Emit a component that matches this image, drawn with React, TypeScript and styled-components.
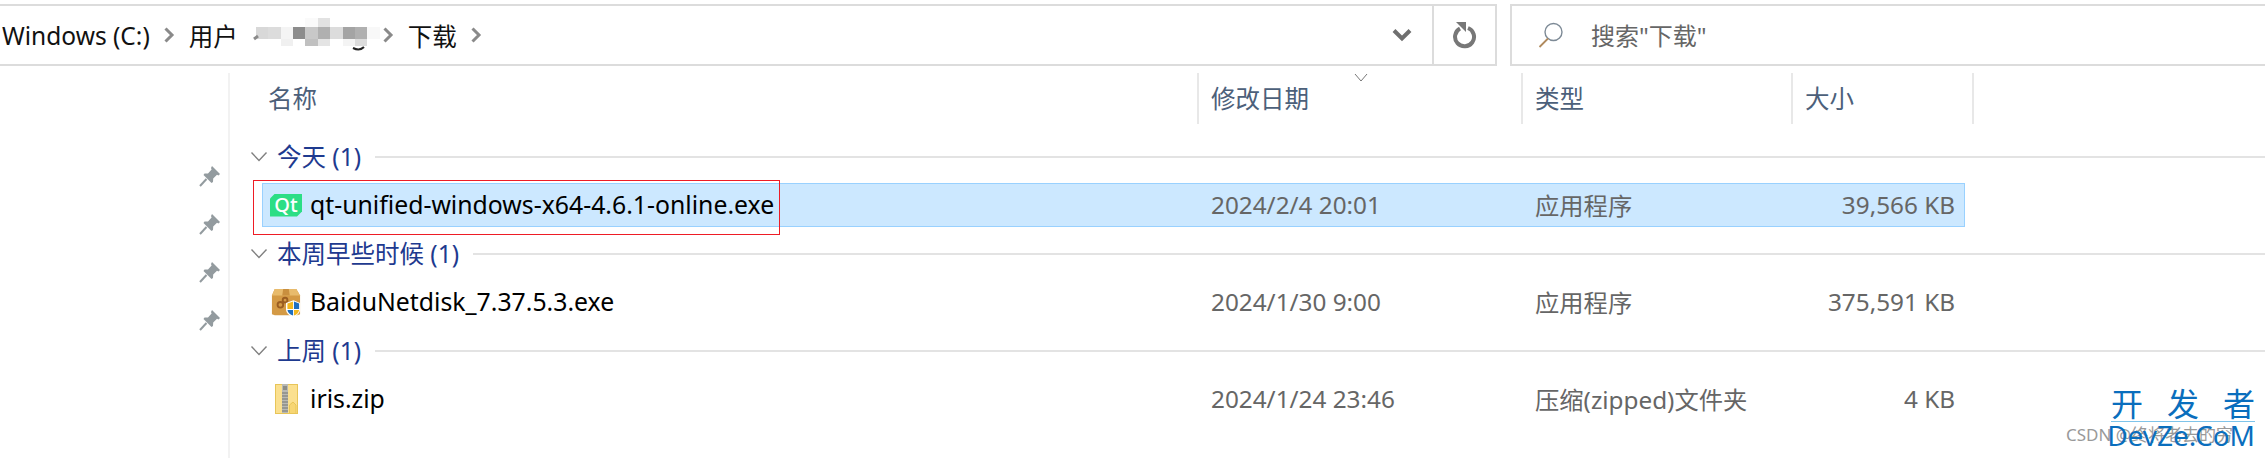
import styled, { createGlobalStyle } from 'styled-components';

const GlobalStyle = createGlobalStyle`
  html, body {
    margin: 0;
    padding: 0;
    background: #fff;
  }
  body {
    width: 2265px;
    height: 458px;
    overflow: hidden;
    font-family: "Noto Sans", "Noto Sans CJK SC", sans-serif;
  }
`;

// the pixelated part of the path, row by row
const mosaic = [
  { height: 9, shades: ['ff', 'ff', 'ff', 'ff', 'fa', 'e2', 'ff', 'ff', 'ff', 'ff'] },
  { height: 12, shades: ['d8', 'dc', 'f4', '8c', 'c8', 'b0', 'dc', 'a4', 'b0', 'f8'] },
  { height: 7, shades: ['ff', 'ff', 'f0', 'ff', 'c0', 'e4', 'ff', 'f4', 'dc', 'ff'] },
];

const files = [
  {
    group: '今天 (1)',
    name: 'qt-unified-windows-x64-4.6.1-online.exe',
    date: '2024/2/4 20:01',
    type: '应用程序',
    size: '39,566 KB',
    icon: 'qt',
    selected: true,
  },
  {
    group: '本周早些时候 (1)',
    name: 'BaiduNetdisk_7.37.5.3.exe',
    date: '2024/1/30 9:00',
    type: '应用程序',
    size: '375,591 KB',
    icon: 'box',
    selected: false,
  },
  {
    group: '上周 (1)',
    name: 'iris.zip',
    date: '2024/1/24 23:46',
    type: '压缩(zipped)文件夹',
    size: '4 KB',
    icon: 'zip',
    selected: false,
  },
];

const Chevron = () => (
  <svg width="12" height="18" viewBox="0 0 12 18">
    <path d="M2.5 2.5 L9 9 L2.5 15.5" fill="none" stroke="#8a8a8a" strokeWidth="3" />
  </svg>
);

const GroupToggle = () => (
  <svg width="18" height="12" viewBox="0 0 18 12">
    <path d="M1.5 1.5 L9 9.5 L16.5 1.5" fill="none" stroke="#808080" strokeWidth="1.4" />
  </svg>
);

const Pin = () => (
  <svg width="22" height="22" viewBox="0 0 22 22">
    <path d="M13 1 L21 9 L19.5 10.5 L18 9.8 L14.2 13.4 L14 17 L12.5 18 L4.5 10 L5.5 8.5 L9 8.4 L12.6 4.5 L12 3 Z" fill="#939b9f" />
    <path d="M7.5 14 L1 21" stroke="#939b9f" strokeWidth="2" />
  </svg>
);

const BoxIcon = () => (
  <svg width="30" height="30" viewBox="0 0 32 32">
    <path d="M4 2 H27 L31 9 V29 L28 30 H4 L1 29 V9 Z" fill="#d49a45" />
    <path d="M4 2 H27 L31 9 H1 Z" fill="#e8bb6c" />
    <path d="M13 2 H19 L20 9 H12 Z" fill="#c98f3e" />
    <circle cx="10" cy="19" r="3" fill="none" stroke="#9b5d20" strokeWidth="2" />
    <circle cx="15" cy="14" r="2.5" fill="none" stroke="#9b5d20" strokeWidth="2" />
    <path d="M16 17 L24 14 L31 17 V24 C31 28 27 31 24 32 C20 31 16 28 16 24 Z" fill="#fff" />
    <path d="M23.5 15.5 V23.5 H17.5 V17.5 Z" fill="#f4b81f" />
    <path d="M24.5 15.5 L30 17.5 V23.5 H24.5 Z" fill="#1f6fc0" />
    <path d="M17.5 24.5 H23.5 V30.5 C20.5 29.5 18 27.5 17.5 24.5 Z" fill="#1f6fc0" />
    <path d="M24.5 24.5 H30 C29.5 27.5 27.5 29.5 24.5 30.5 Z" fill="#f4b81f" />
  </svg>
);

const ZipIcon = () => (
  <svg width="23" height="30" viewBox="0 0 23 30">
    <rect x="0.5" y="0.5" width="22" height="29" fill="#fbe08f" stroke="#e8c558" />
    <rect x="7" y="0" width="6" height="29" fill="#b9b9b4" />
    <path d="M7 9 H13 M7 12 H13 M7 15 H13 M7 18 H13 M7 21 H13 M7 24 H13 M7 27 H13" stroke="#77776f" strokeWidth="1.2" />
    <rect x="8" y="2" width="4" height="4" fill="#8c8c86" />
    <path d="M18 18 L21 21 V29.5 H14.5 V21 Z" fill="#f7d673" stroke="#e8c558" />
  </svg>
);

const App = () => {
  return (
    <>
      <GlobalStyle />
      <Page>
        <Toolbar>
          <AddressBar>
            <Crumb>Windows (C:)</Crumb>
            <Chevron />
            <Crumb>用户</Crumb>
            <Blurred>
              {mosaic.map((row, rowIndex) => (
                <MosaicRow key={rowIndex} $height={row.height}>
                  {row.shades.map((shade, index) => (
                    <MosaicCell key={index} $shade={shade} />
                  ))}
                </MosaicRow>
              ))}
              <Peek width="124" height="34" viewBox="0 0 124 34">
                <path d="M1 21 L5 18" stroke="#8a8a8a" strokeWidth="3" fill="none" />
                <path d="M100 30 C104 32 108 32 111 29" stroke="#222" strokeWidth="2" fill="none" />
              </Peek>
            </Blurred>
            <Chevron />
            <Crumb $after>下载</Crumb>
            <Chevron />
            <Dropdown>
              <svg width="20" height="14" viewBox="0 0 20 14">
                <path d="M2 2.5 L10 10.5 L18 2.5" fill="none" stroke="#6f6f6f" strokeWidth="4" />
              </svg>
            </Dropdown>
            <Refresh>
              <svg width="24" height="30" viewBox="0 0 24 30">
                <path d="M7 8.5 A9.5 9.5 0 1 0 15 8" fill="none" stroke="#777" strokeWidth="4" />
                <path d="M3 2 H13 V12 Z" fill="#777" />
              </svg>
            </Refresh>
          </AddressBar>
          <SearchBox>
            <svg width="26" height="26" viewBox="0 0 26 26">
              <circle cx="15.5" cy="10" r="8.5" fill="none" stroke="#7d8a96" strokeWidth="1.4" />
              <path d="M10 16.5 L1.5 25" stroke="#b08a5e" strokeWidth="1.8" />
            </svg>
            <SearchText>搜索"下载"</SearchText>
          </SearchBox>
        </Toolbar>
        <Body>
          <PinColumn>
            <Pin />
            <Pin />
            <Pin />
            <Pin />
          </PinColumn>
          <Main>
            <HeaderRow>
              <HeaderCell>名称</HeaderCell>
              <HeaderCell>
                修改日期
                <SortArrow>
                  <svg width="14" height="9" viewBox="0 0 14 9">
                    <path d="M1 1 L7 8 L13 1" fill="none" stroke="#777" strokeWidth="1" />
                  </svg>
                </SortArrow>
              </HeaderCell>
              <HeaderCell>类型</HeaderCell>
              <HeaderCell>大小</HeaderCell>
            </HeaderRow>
            {files.map((file) => (
              <section key={file.name}>
                <GroupRow>
                  <GroupToggle />
                  <GroupTitle>{file.group}</GroupTitle>
                  <GroupLine />
                </GroupRow>
                <FileRowFrame>
                  <FileRow $selected={file.selected}>
                    <NameCell>
                      <IconSlot>
                        {file.icon === 'qt' && <QtBadge>Qt</QtBadge>}
                        {file.icon === 'box' && <BoxIcon />}
                        {file.icon === 'zip' && <ZipIcon />}
                      </IconSlot>
                      <FileName>{file.name}</FileName>
                    </NameCell>
                    <MetaCell>{file.date}</MetaCell>
                    <MetaCell>{file.type}</MetaCell>
                    <SizeCell>{file.size}</SizeCell>
                  </FileRow>
                  {file.selected && <RedBox />}
                </FileRowFrame>
              </section>
            ))}
          </Main>
        </Body>
        <Watermark>
          <Csdn>CSDN @终将老去的穷</Csdn>
          <BrandTop>
            <span>开</span>
            <span>发</span>
            <span>者</span>
          </BrandTop>
          <BrandBottom>DevZe.CoM</BrandBottom>
        </Watermark>
      </Page>
    </>
  );
};

const Page = styled.div`
  position: relative;
  width: 2265px;
  height: 458px;
  background: #fff;
  overflow: hidden;
`;

const Toolbar = styled.div`
  display: flex;
  gap: 13px;
  padding-top: 4px;
  height: 62px;
`;

const AddressBar = styled.div`
  display: flex;
  align-items: center;
  width: 1497px;
  height: 62px;
  box-sizing: border-box;
  border: 2px solid #dcdcdc;
  border-left: none;
  padding-left: 2px;
  flex-shrink: 0;
`;

const Crumb = styled.span<{ $after?: boolean }>`
  font-size: 24.5px;
  color: #111;
  margin-left: ${(p) => (p.$after ? '14px' : '0')};
  margin-right: 13px;
  white-space: nowrap;

  & + svg {
    margin-right: 14px;
  }
`;

const Blurred = styled.div`
  position: relative;
  width: 124px;
  margin: 0 2px 6px 5px;
  display: flex;
  flex-direction: column;
`;

const Peek = styled.svg`
  position: absolute;
  left: -3px;
  top: 0;
`;

const MosaicRow = styled.div<{ $height: number }>`
  display: flex;
  height: ${(p) => p.$height}px;
`;

const MosaicCell = styled.div<{ $shade: string }>`
  flex: 1;
  background: #${(p) => p.$shade.repeat(3)};
`;

const Dropdown = styled.div`
  margin-left: auto;
  width: 60px;
  display: flex;
  justify-content: center;
`;

const Refresh = styled.div`
  width: 61px;
  height: 100%;
  border-left: 2px solid #dcdcdc;
  display: flex;
  align-items: center;
  justify-content: center;
`;

const SearchBox = styled.div`
  flex: 1;
  height: 62px;
  box-sizing: border-box;
  border: 2px solid #dcdcdc;
  border-right: none;
  display: flex;
  align-items: center;
  padding-left: 26px;
  gap: 27px;
`;

const SearchText = styled.span`
  font-size: 24px;
  color: #666;
  margin-bottom: 2px;
`;

const Body = styled.div`
  display: flex;
  margin-top: 7px;
`;

const PinColumn = styled.div`
  width: 230px;
  height: 385px;
  box-sizing: border-box;
  border-right: 2px solid #f2f2f2;
  display: flex;
  flex-direction: column;
  align-items: flex-end;
  gap: 26px;
  padding: 92px 7px 0 0;
`;

const Main = styled.div`
  flex: 1;
`;

const HeaderRow = styled.div`
  display: grid;
  grid-template-columns: 968px 324px 270px 181px;
  height: 51px;
  margin: 0 0 6px 1px;
`;

const HeaderCell = styled.div`
  position: relative;
  display: flex;
  align-items: center;
  padding: 0 0 2px 37px;
  font-size: 24.5px;
  color: #4c607a;
  box-sizing: border-box;
  border-right: 2px solid #e8e8e8;

  & + & {
    padding-left: 12px;
  }
`;

const SortArrow = styled.span`
  position: absolute;
  top: 0;
  left: 155px;
  line-height: 0;
`;

const GroupRow = styled.div`
  display: flex;
  align-items: center;
  height: 53px;
  padding-left: 20px;
`;

const GroupTitle = styled.span`
  font-size: 24.5px;
  color: #1e3a8f;
  margin-left: 9px;
  margin-right: 14px;
  padding-bottom: 3px;
  white-space: nowrap;
`;

const GroupLine = styled.div`
  flex: 1;
  height: 2px;
  background: #e3e3e3;
`;

const FileRowFrame = styled.div`
  position: relative;
  margin-left: 32px;
  width: 1703px;
`;

const FileRow = styled.div<{ $selected: boolean }>`
  display: grid;
  grid-template-columns: 948px 324px 270px 150px;
  align-items: center;
  height: 44px;
  box-sizing: border-box;
  border: 1px solid ${(p) => (p.$selected ? '#99d1ff' : 'transparent')};
  background: ${(p) => (p.$selected ? '#cce8ff' : 'transparent')};
`;

const NameCell = styled.div`
  display: flex;
  align-items: center;
  white-space: nowrap;
`;

const FileName = styled.span`
  font-size: 24.8px;
  color: #000;
  padding-bottom: 2px;
`;

const IconSlot = styled.div`
  width: 32px;
  margin: 0 8px 0 7px;
  display: flex;
  justify-content: center;
  align-items: center;
`;

const QtBadge = styled.div`
  width: 32px;
  height: 23px;
  background: #2cde85;
  color: #fff;
  font-size: 20px;
  font-weight: 500;
  line-height: 22px;
  text-align: center;
  clip-path: polygon(5px 0, 100% 0, 100% calc(100% - 5px), calc(100% - 5px) 100%, 0 100%, 0 5px);
`;

const MetaCell = styled.div`
  font-size: 24.3px;
  color: #666;
  padding-bottom: 2px;
  white-space: nowrap;
`;

const SizeCell = styled(MetaCell)`
  text-align: right;
`;

const RedBox = styled.div`
  position: absolute;
  left: -9px;
  top: -3px;
  width: 525px;
  height: 53px;
  border: 1px solid #ee1c25;
`;

const Watermark = styled.div`
  position: absolute;
  right: 10px;
  bottom: 9px;
  width: 189px;
  height: 62px;
`;

const Csdn = styled.div`
  position: absolute;
  left: 0;
  bottom: 2px;
  font-size: 17px;
  line-height: 24px;
  color: #999;
  white-space: nowrap;
`;

const BrandTop = styled.div`
  position: absolute;
  right: 0;
  top: 0;
  width: 144px;
  display: flex;
  justify-content: space-between;
  font-size: 32px;
  line-height: 34px;
  color: #0a6ebd;
  border-bottom: 1px solid #7fc4ea;
`;

const BrandBottom = styled.div`
  position: absolute;
  right: 0;
  bottom: 0;
  font-size: 28px;
  line-height: 27px;
  color: #0a6ebd;
  white-space: nowrap;
`;

export default App;
